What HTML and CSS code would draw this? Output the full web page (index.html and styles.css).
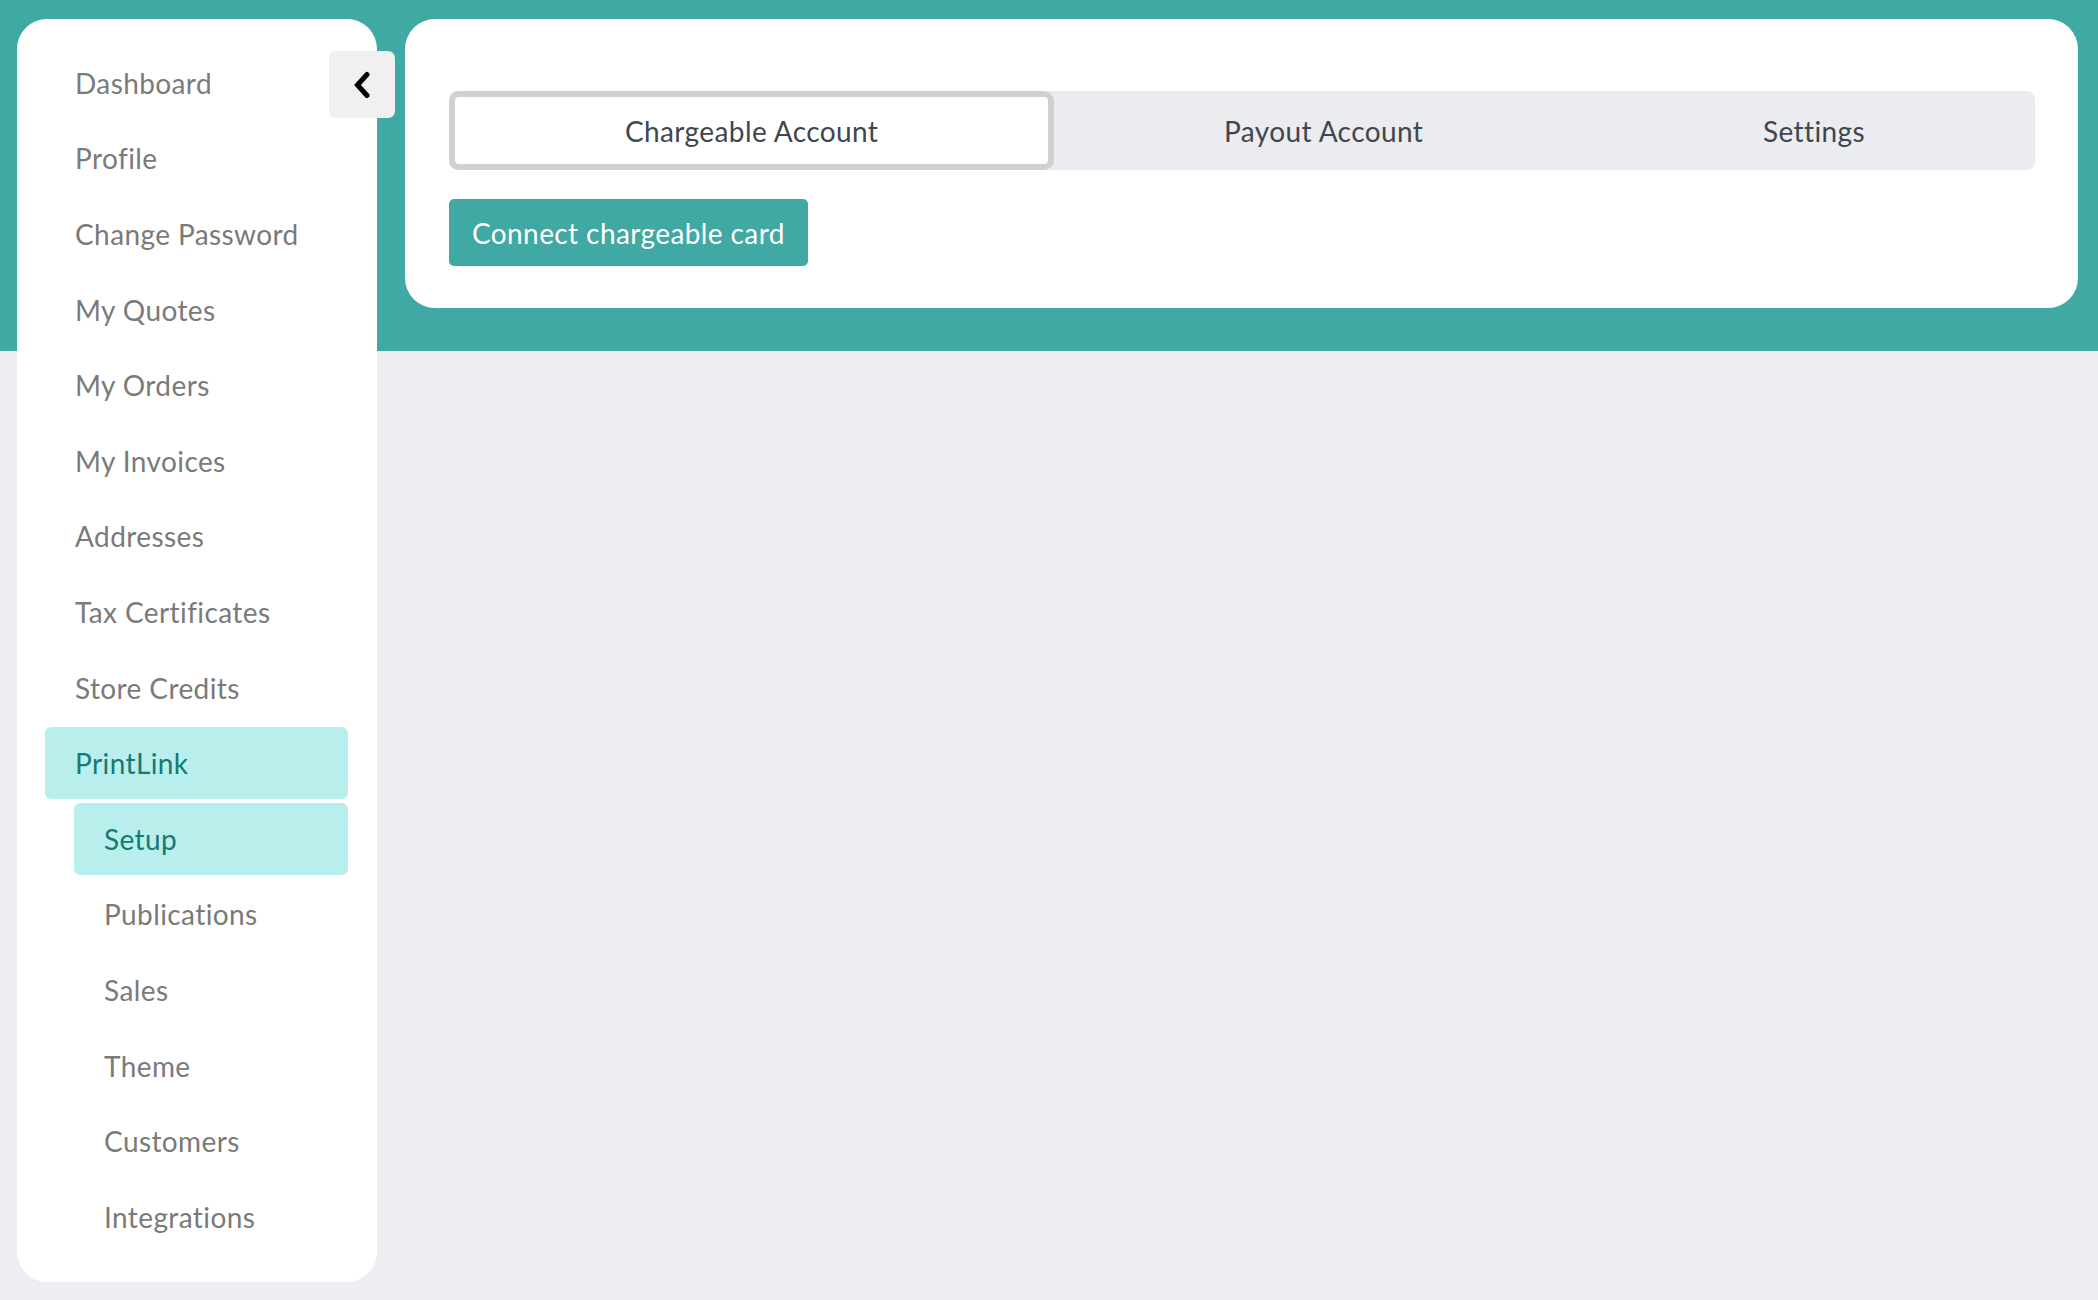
FILE: index.html
```html
<!DOCTYPE html>
<html lang="en">
<head>
  <meta charset="UTF-8">
  <meta name="viewport" content="width=device-width, initial-scale=1.0">
  <title>PrintLink Setup</title>
  <link rel="stylesheet" href="styles.css">
</head>
<body>
  <div class="page">
    <aside class="sidebar">
      <button class="collapse-btn" type="button" aria-label="Collapse menu">
        <svg width="20" height="28" viewBox="0 0 20 28">
          <path d="M15 3.5 L5.5 14 L15 24.5" fill="none" stroke="#000" stroke-width="5" stroke-linecap="round" stroke-linejoin="miter"/>
        </svg>
      </button>
      <nav class="menu">
        <a class="menu-item" href="#">Dashboard</a>
        <a class="menu-item" href="#">Profile</a>
        <a class="menu-item" href="#">Change Password</a>
        <a class="menu-item" href="#">My Quotes</a>
        <a class="menu-item" href="#">My Orders</a>
        <a class="menu-item" href="#">My Invoices</a>
        <a class="menu-item" href="#">Addresses</a>
        <a class="menu-item" href="#">Tax Certificates</a>
        <a class="menu-item" href="#">Store Credits</a>
        <a class="menu-item active" href="#">PrintLink</a>
        <a class="menu-item sub active" href="#">Setup</a>
        <a class="menu-item sub" href="#">Publications</a>
        <a class="menu-item sub" href="#">Sales</a>
        <a class="menu-item sub" href="#">Theme</a>
        <a class="menu-item sub" href="#">Customers</a>
        <a class="menu-item sub" href="#">Integrations</a>
      </nav>
    </aside>

    <main class="content">
      <section class="card">
        <div class="tabs">
          <button class="tab selected" type="button">Chargeable Account</button>
          <button class="tab" type="button">Payout Account</button>
          <button class="tab" type="button">Settings</button>
        </div>
        <button class="primary-btn" type="button">Connect chargeable card</button>
      </section>
    </main>
  </div>
</body>
</html>
```

FILE: styles.css
```css
body {
  margin: 0;
  padding: 0;
  font-family: Lato, "Open Sans", sans-serif;
  letter-spacing: 0.4px;
  background-color: #eeedf2;
}

.page {
  display: flex;
  align-items: flex-start;
  gap: 28px;
  min-height: 100vh;
  box-sizing: border-box;
  padding: 19px 20px 0 17px;
  background: linear-gradient(to bottom, #40a9a3 0, #40a9a3 351px, #eeedf2 351px);
}

.sidebar {
  position: relative;
  width: 360px;
  flex-shrink: 0;
  box-sizing: border-box;
  padding: 28px 29px 29px 28px;
  background-color: white;
  border-radius: 30px;
}

.collapse-btn {
  position: absolute;
  top: 32px;
  left: 312px;
  width: 66px;
  height: 67px;
  display: flex;
  align-items: center;
  justify-content: center;
  padding: 0;
  border: none;
  border-radius: 7px;
  background-color: #f0f0f0;
  cursor: pointer;
}

.menu {
  display: flex;
  flex-direction: column;
  gap: 4px;
}

.menu-item {
  display: flex;
  align-items: center;
  height: 71.6px;
  padding-left: 30px;
  border-radius: 6px;
  font-size: 28px;
  color: #7a7a7a;
  text-decoration: none;
}

.menu-item.sub {
  margin-left: 29px;
}

.menu-item.active {
  background-color: #b8efec;
  color: #167a6f;
}

.content {
  flex: 1;
}

.card {
  background-color: white;
  border-radius: 30px;
  padding: 72px 43px 42px 44px;
}

.tabs {
  display: flex;
  height: 79px;
  background-color: #ebecef;
  border-radius: 8px;
  margin-bottom: 29px;
}

.tab {
  flex: 1 1 auto;
  padding: 0;
  border: none;
  background: none;
  font-family: inherit;
  letter-spacing: inherit;
  font-size: 28px;
  color: #3f4650;
  cursor: pointer;
}

.tab.selected {
  background-color: white;
  border: 6px solid #cfd0d4;
  border-radius: 10px;
}

.primary-btn {
  height: 67px;
  padding: 0 23px;
  border: none;
  border-radius: 5px;
  background-color: #40a9a3;
  color: white;
  font-family: inherit;
  letter-spacing: inherit;
  font-size: 28px;
  cursor: pointer;
}
```
